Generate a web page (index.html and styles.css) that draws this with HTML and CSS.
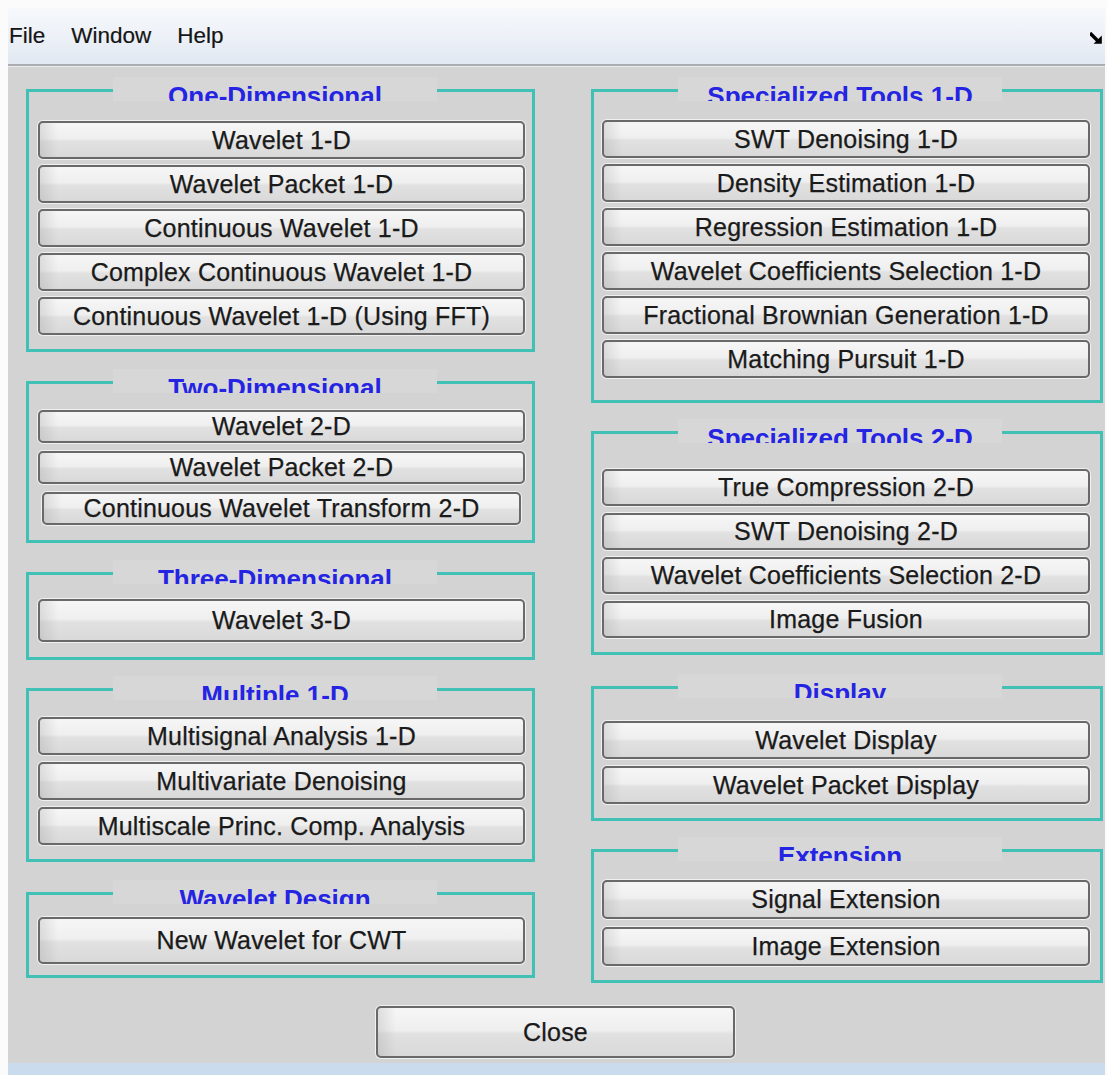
FILE: index.html
```html
<!DOCTYPE html>
<html lang="en">
<head>
<meta charset="utf-8">
<title>Wavelet Toolbox Main Menu</title>
<link rel="stylesheet" href="styles.css">
</head>
<body>
<div class="window">
  <div class="menubar">
    <span class="menu-item">File</span>
    <span class="menu-item">Window</span>
    <span class="menu-item">Help</span>
    <svg class="undock" viewBox="0 0 12 12" aria-hidden="true">
      <path d="M1.2 2.2 L7 8" stroke="#000" stroke-width="3.4" stroke-linecap="square"/>
      <path d="M11.8 3.6 L11.8 11.8 L3.6 11.8 Z" fill="#000"/>
    </svg>
  </div>

  <div class="panel">
    <div class="columns">
      <div class="col col-left">
        <section class="group g-one">
          <h2 class="legend"><span>One-Dimensional</span></h2>
          <div class="btns">
            <button class="btn">Wavelet 1-D</button>
            <button class="btn">Wavelet Packet 1-D</button>
            <button class="btn">Continuous Wavelet 1-D</button>
            <button class="btn">Complex Continuous Wavelet 1-D</button>
            <button class="btn">Continuous Wavelet 1-D (Using FFT)</button>
          </div>
        </section>

        <section class="group g-two">
          <h2 class="legend"><span>Two-Dimensional</span></h2>
          <div class="btns">
            <button class="btn">Wavelet 2-D</button>
            <button class="btn">Wavelet Packet 2-D</button>
            <button class="btn btn-inset">Continuous Wavelet Transform 2-D</button>
          </div>
        </section>

        <section class="group g-three">
          <h2 class="legend"><span>Three-Dimensional</span></h2>
          <div class="btns">
            <button class="btn">Wavelet 3-D</button>
          </div>
        </section>

        <section class="group g-multi">
          <h2 class="legend"><span>Multiple 1-D</span></h2>
          <div class="btns">
            <button class="btn">Multisignal Analysis 1-D</button>
            <button class="btn">Multivariate Denoising</button>
            <button class="btn">Multiscale Princ. Comp. Analysis</button>
          </div>
        </section>

        <section class="group g-design">
          <h2 class="legend"><span>Wavelet Design</span></h2>
          <div class="btns">
            <button class="btn">New Wavelet for CWT</button>
          </div>
        </section>
      </div>

      <div class="col col-right">
        <section class="group r-spec1">
          <h2 class="legend"><span>Specialized Tools 1-D</span></h2>
          <div class="btns">
            <button class="btn">SWT Denoising 1-D</button>
            <button class="btn">Density Estimation 1-D</button>
            <button class="btn">Regression Estimation 1-D</button>
            <button class="btn">Wavelet Coefficients Selection 1-D</button>
            <button class="btn">Fractional Brownian Generation 1-D</button>
            <button class="btn">Matching Pursuit 1-D</button>
          </div>
        </section>

        <section class="group r-spec2">
          <h2 class="legend"><span>Specialized Tools 2-D</span></h2>
          <div class="btns">
            <button class="btn">True Compression 2-D</button>
            <button class="btn">SWT Denoising 2-D</button>
            <button class="btn">Wavelet Coefficients Selection 2-D</button>
            <button class="btn">Image Fusion</button>
          </div>
        </section>

        <section class="group r-display">
          <h2 class="legend"><span>Display</span></h2>
          <div class="btns">
            <button class="btn">Wavelet Display</button>
            <button class="btn">Wavelet Packet Display</button>
          </div>
        </section>

        <section class="group r-ext">
          <h2 class="legend"><span>Extension</span></h2>
          <div class="btns">
            <button class="btn">Signal Extension</button>
            <button class="btn">Image Extension</button>
          </div>
        </section>
      </div>
    </div>

    <div class="close-row">
      <button class="btn btn-close">Close</button>
    </div>
  </div>

  <div class="frame-edge"></div>
</div>
</body>
</html>
```

FILE: styles.css
```css
html, body {
  margin: 0;
  padding: 0;
  background: #ffffff;
}

body {
  font-family: "Liberation Sans", Arial, sans-serif;
}

.window {
  width: 1107px;
  height: 1075px;
  box-sizing: border-box;
  padding: 8px 2px 0 8px;
  display: flex;
  flex-direction: column;
  background: #fbfbfb;
}

/* ---------- menu bar ---------- */
.menubar {
  height: 56px;
  flex: 0 0 auto;
  display: flex;
  align-items: center;
  padding-left: 1px;
  background: linear-gradient(to bottom, #f6f8fc 0%, #eef2f8 45%, #e1e8f1 100%);
  border-bottom: 2px solid #a9acb0;
  box-shadow: 0 1px 0 #ececec;
  position: relative;
}

.menu-item {
  font-size: 22.5px;
  color: #151515;
  margin-right: 26px;
  -webkit-text-stroke: 0.2px #151515;
}

.undock {
  position: absolute;
  right: 3px;
  top: 24px;
  width: 12px;
  height: 12px;
}

/* ---------- main panel ---------- */
.panel {
  flex: 1 1 auto;
  margin-top: 1px;
  background: #d3d3d3;
  display: flex;
  flex-direction: column;
}

.columns {
  display: flex;
  padding: 22px 0 0 18px;
  gap: 56px;
}

.col {
  display: flex;
  flex-direction: column;
}

.col-left { width: 509px; }
.col-right { width: 512px; }

/* group box with a caption laid over its top edge */
.group {
  position: relative;
  border: 3px solid #41c1b6;
}

.legend {
  position: absolute;
  top: -15px;
  left: 84px;
  width: 324px;
  height: 24px;
  margin: 0;
  padding-top: 7px;
  box-sizing: border-box;
  overflow: hidden;
  background: #d7d7d7;
  text-align: center;
  font-size: 26px;
  line-height: 24px;
  font-weight: bold;
  color: #2424e2;
  white-space: nowrap;
}

.legend span {
  display: block;
  height: 24px;
}

.btns {
  display: flex;
  flex-direction: column;
}

.col-left .btns { padding: 0 7px 0 9px; }
.col-right .btns { padding: 0 10px 0 8px; }

/* push button */
.btn {
  font-family: "Liberation Sans", Arial, sans-serif;
  font-size: 25px;
  letter-spacing: 0.2px;
  color: #1a1a1a;
  -webkit-text-stroke: 0.25px #1a1a1a;
  padding: 0;
  margin: 0;
  border: 2px solid #696969;
  border-radius: 5px;
  background:
    linear-gradient(to right, rgba(150,150,150,0.25) 0px, rgba(150,150,150,0) 18px),
    linear-gradient(to bottom, #f6f6f6 0%, #efefef 46%, #e1e1e1 54%, #d9d9d9 100%);
  box-shadow: 0 0 0 1px #f0f0f0;
  white-space: nowrap;
  overflow: hidden;
  cursor: default;
}

.btn-inset { margin: 0 4px; }

/* per-group spacing */
.g-one { padding: 29px 0 14px; }
.g-one .btns { gap: 6px; }
.g-one .btn { height: 38px; }

.g-two { margin-top: 29px; padding: 26px 0 15px; }
.g-two .btns { gap: 8px; }
.g-two .btn { height: 33px; }

.g-three { margin-top: 29px; padding: 24px 0 15px; }
.g-three .btn { height: 43px; }

.g-multi { margin-top: 28px; padding: 26px 0 14px; }
.g-multi .btns { gap: 7px; }
.g-multi .btn { height: 38px; }

.g-design { margin-top: 30px; padding: 22px 0 11px; }
.g-design .btn { height: 47px; }

.r-spec1 { padding: 28px 0 22px; }
.r-spec1 .btns { gap: 6px; }
.r-spec1 .btn { height: 38px; }

.r-spec2 { margin-top: 28px; padding: 35px 0 14px; }
.r-spec2 .btns { gap: 7px; }
.r-spec2 .btn { height: 37px; }

.r-display { margin-top: 31px; padding: 32px 0 14px; }
.r-display .btns { gap: 7px; }
.r-display .btn { height: 38px; }

.r-ext { margin-top: 28px; padding: 28px 0 14px; }
.r-ext .btns { gap: 8px; }
.r-ext .btn { height: 39px; }

/* bottom row */
.close-row {
  display: flex;
  justify-content: center;
  margin-top: 23px;
  padding-right: 2px;
}

.btn-close {
  width: 359px;
  height: 52px;
}

.frame-edge {
  flex: 0 0 12px;
  background: #c9dbec;
}
```
